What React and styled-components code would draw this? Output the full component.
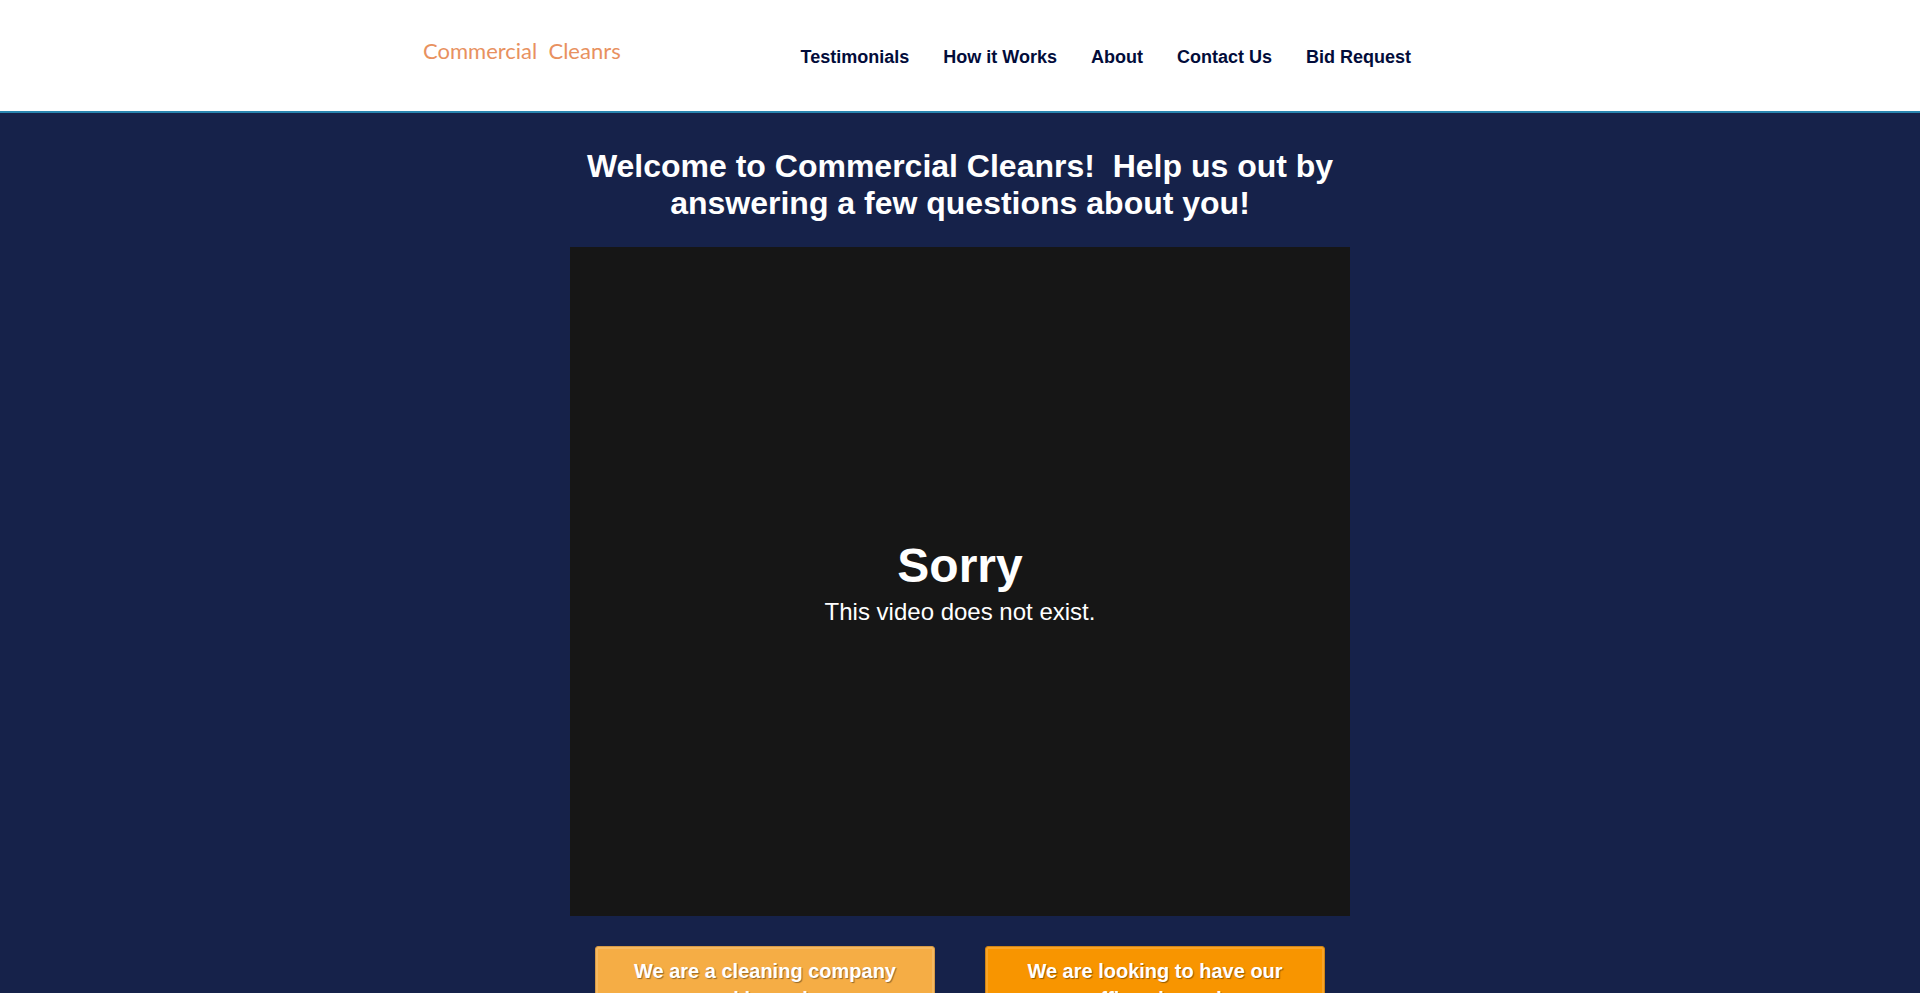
import React from 'react'
import styled, { createGlobalStyle } from 'styled-components'

const GlobalStyle = createGlobalStyle`
  * {
    box-sizing: border-box;
  }
  body {
    margin: 0;
    background-color: #16224a;
    font-family: "Liberation Sans", Arial, sans-serif;
  }
`

const Header = styled.header`
  background-color: #fff;
  border-bottom: 2px solid #2a86b0;
`

const HeaderInner = styled.div`
  display: flex;
  justify-content: space-between;
  align-items: flex-start;
  max-width: 1074px;
  margin: 0 auto;
  padding: 39px 86px 37px 0;
`

const LogoLink = styled.a`
  color: #e8915f;
  font-family: Lato, sans-serif;
  font-size: 22px;
  line-height: 24px;
  text-decoration: none;
`

const Nav = styled.nav`
  display: flex;
  gap: 34px;
`

const NavLink = styled.a`
  color: #020c3a;
  font-size: 18px;
  font-weight: bold;
  line-height: 34px;
  padding-top: 1px;
  text-decoration: none;
`

const Main = styled.main`
  display: flex;
  flex-direction: column;
  max-width: 780px;
  margin: 0 auto;
  padding-top: 35px;
`

const Title = styled.h1`
  margin: 0 0 25px;
  color: #fff;
  font-size: 32px;
  line-height: 37px;
  text-align: center;
`

const Video = styled.section`
  display: flex;
  flex-direction: column;
  align-items: center;
  justify-content: center;
  height: 669px;
  padding-top: 4px;
  background-color: #161616;
  color: #fff;
`

const VideoTitle = styled.h2`
  margin: 0;
  font-size: 48px;
  line-height: 56px;
`

const VideoText = styled.p`
  margin: 0;
  font-size: 24px;
  line-height: 36px;
`

const Choices = styled.div`
  display: grid;
  grid-template-columns: 1fr 1fr;
  gap: 50px;
  padding: 30px 25px;
`

const Choice = styled.button`
  padding: 10px 30px;
  border: 1px solid ${props => props.$edge};
  border-radius: 3px;
  background-color: ${props => props.$color};
  box-shadow: inset 0 0 0 2px rgba(255, 255, 255, 0.15);
  color: #fff;
  font-family: inherit;
  font-size: 20px;
  font-weight: bold;
  line-height: 28px;
  text-shadow: 1px 1px 1px rgba(0, 0, 0, 0.4);
  cursor: pointer;
`

const links = ['Testimonials', 'How it Works', 'About', 'Contact Us', 'Bid Request']

const App = () => {
  return (
    <>
      <GlobalStyle />
      <Header>
        <HeaderInner>
          <LogoLink href="#">Commercial&nbsp; Cleanrs</LogoLink>
          <Nav>
            {links.map(link => (
              <NavLink href="#" key={link}>{link}</NavLink>
            ))}
          </Nav>
        </HeaderInner>
      </Header>
      <Main>
        <Title>Welcome to Commercial Cleanrs!&nbsp; Help us out by answering a few questions about you!</Title>
        <Video>
          <VideoTitle>Sorry</VideoTitle>
          <VideoText>This video does not exist.</VideoText>
        </Video>
        <Choices>
          <Choice $color="#f5ad45" $edge="#d79a45">We are a cleaning company seeking sales</Choice>
          <Choice $color="#f89500" $edge="#d08413">We are looking to have our office cleaned</Choice>
        </Choices>
      </Main>
    </>
  )
}

export default App
